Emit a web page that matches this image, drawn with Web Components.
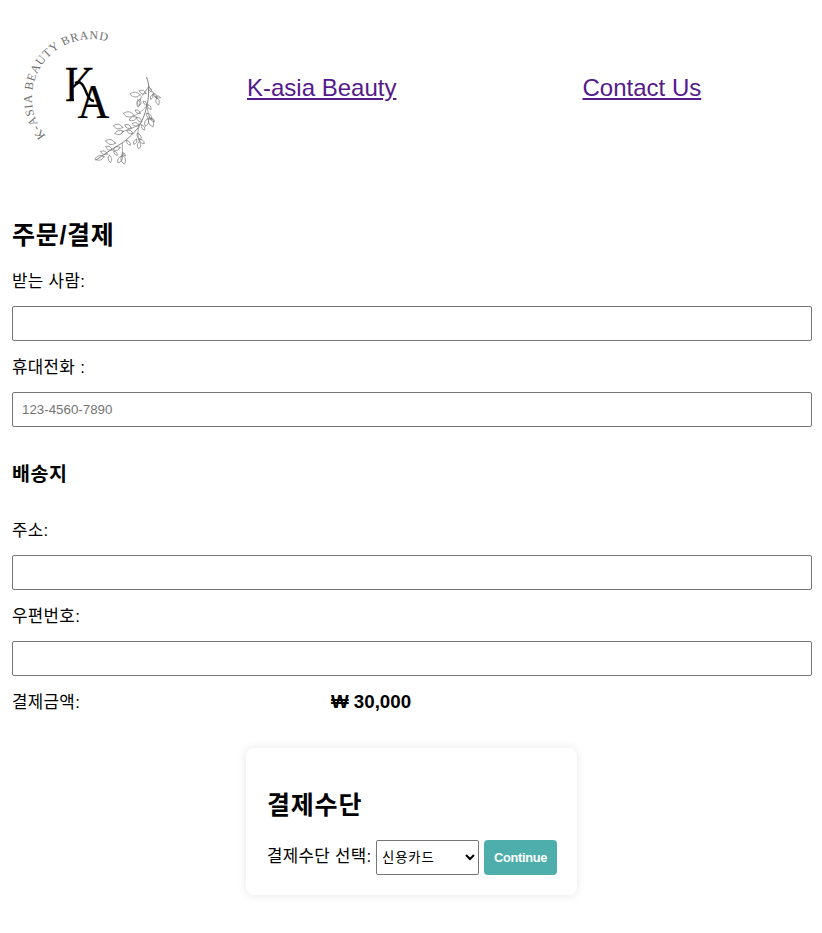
<!DOCTYPE html>
<html lang="ko">
<head>
<meta charset="utf-8">
<title>K-asia Beauty</title>
<style>
html{background:#fff}
body{margin:0;min-height:933px;color:#000;font:16px/22px "Liberation Sans","Noto Sans CJK KR",sans-serif}
</style>
</head>
<body>
<order-page></order-page>
<script>
const define = (name, html, setup) => customElements.define(name, class extends HTMLElement {
  constructor(){
    super();
    const t = document.createElement('template');
    t.innerHTML = html;
    this.attachShadow({mode:'open'}).append(t.content.cloneNode(true));
    if (setup) setup(this, this.shadowRoot);
  }
});

// Leaves of the sprig: base x, base y, direction in degrees, length
const leaves = [
 [176,52,60,14],[168,70,200,20],[150,75,185,28],[150,88,105,22],[144,90,80,16],[190,70,50,16],[197,80,10,14],[200,84,75,20],[188,74,110,14],
 [173,104,55,16],[170,105,230,14],[150,130,215,16],[132,136,190,30],[140,142,160,22],[170,130,50,22],[178,142,70,28],[182,145,40,14],[174,146,110,22],
 [155,155,220,18],[148,165,190,20],[155,165,60,16],[124,174,205,20],[98,172,190,26],[100,184,165,24],[128,190,205,18],
 [142,190,60,20],[148,208,40,18],[148,215,95,20],[140,208,120,16],[110,212,50,16],[76,220,195,28],[90,232,160,20],
 [96,255,75,26],[96,258,120,22],[98,248,50,12],[66,240,210,20],[52,252,200,20],[58,256,80,20],[42,260,165,26],[72,244,50,14]
];
const leafPaths = leaves.map(([x,y,a,l]) =>
  `<path transform="translate(${x} ${y}) rotate(${a})" d="M0 0Q${l*.5} ${-l*.55} ${l*1.1} 0Q${l*.5} ${l*.55} 0 0Z"/>`).join('');

define('brand-logo', `<style>:host{display:block;width:150px;height:150px}svg{display:block;overflow:visible}text{font-family:"Liberation Serif",serif}</style>
<svg width="150" height="150" viewBox="18 22 150 150" role="img" aria-label="K-asia Beauty Brand">
 <defs><path id="ring" d="M45.5 135.8A59 59 0 0 1 111.2 42.7"/>
 <clipPath id="stem"><path d="M60 60H100V70H91L74 89V104H60Z"/></clipPath></defs>
 <text font-size="12" fill="#707070"><textPath href="#ring" textLength="150" lengthAdjust="spacing">K-ASIA BEAUTY BRAND</textPath></text>
 <g clip-path="url(#stem)"><text transform="translate(65 101) scale(.83 1)" font-size="50" stroke="#000" stroke-width=".3">K</text></g>
 <path d="M75 83C82 80 84 87 87 94C89 99 91 101 94 101" fill="none" stroke="#000" stroke-width="2.4"/>
 <text transform="translate(77.5 118) scale(.92 1)" font-size="48" stroke="#000" stroke-width=".2">A</text>
 <g transform="translate(90 70) scale(.33333)" fill="none" stroke="#808080" stroke-width="2.1" stroke-linecap="round">
  <path stroke="#606060" stroke-width="2.4" d="M170 22C174 35 177 42 176 55C176 75 175 90 170 110C165 135 155 155 145 172C130 192 105 215 85 226C60 240 40 256 18 270"/>
  <path d="M176 50C165 68 155 74 150 90M177 50L200 84M170 108C155 125 145 132 132 138M170 108L180 148M150 162C130 175 115 178 95 186M150 160C145 175 140 190 148 215M97 220L97 260"/>
  ${leafPaths}
 </g>
</svg>`);

define('site-header', `<style>
:host{display:grid;grid-template-columns:150px 1fr 1fr;align-items:center;height:176px;padding:0 0 0 18px;box-sizing:border-box}
brand-logo{align-self:start;margin-top:22px}
nav{display:contents}
a{color:#551a8b;text-decoration:underline;font-size:24px;line-height:28px;justify-self:start}
a:first-child{margin-left:79px}a:last-child{margin-left:87.5px}
</style><brand-logo></brand-logo><nav><a href="#">K-asia Beauty</a><a href="#">Contact Us</a></nav>`);

define('form-field', `<style>
:host{display:block;margin-bottom:15px}
label{display:block;height:22px;font-size:16.8px;letter-spacing:.35px;margin-bottom:13px;padding-top:1px}
input{display:block;box-sizing:border-box;width:100%;height:35px;border:1px solid #767676;border-radius:2px;padding:8px 9px;font:13.333px "Liberation Sans",sans-serif;background:#fff}
input::placeholder{color:#757575}
</style><label><slot></slot></label><input>`, (el, root) => {
  root.querySelector('input').placeholder = el.getAttribute('placeholder') || '';
});

define('pay-card', `<style>
:host{display:block;box-sizing:border-box;width:331px;height:147px;padding:40px 20px 20px 21px;border-radius:8px;background:#fff;box-shadow:0 0 10px rgba(0,0,0,.1)}
h2{margin:0 0 18px;font-size:25px;line-height:34px;letter-spacing:.8px}
.row{display:flex;height:35px;gap:5px}
label{width:104px;line-height:33px;font-size:16.8px;letter-spacing:.3px;white-space:nowrap}
select{box-sizing:border-box;width:103px;height:35px;border:1px solid #767676;border-radius:2px;background:#fff;color:#000;padding:0 1px;font:13.333px "Liberation Sans","Noto Sans CJK KR",sans-serif;letter-spacing:.9px}
button{width:73px;height:35px;border:0;border-radius:4px;background:#4daeab;color:#fff;padding:0;font:bold 12.8px "Liberation Sans",sans-serif;letter-spacing:-.3px}
</style><h2>결제수단</h2><div class="row"><label>결제수단 선택:</label><select><option>신용카드</option></select><button>Continue</button></div>`);

define('order-page', `<style>
:host{display:block}
main{padding:42px 10px 0 12px}
h2{margin:0 0 18px;font-size:25px;line-height:34px;letter-spacing:.7px}
h3{margin:34px 0 32px;font-size:19.5px;line-height:26px;letter-spacing:.6px}
.total{display:grid;grid-template-columns:319px 1fr;height:22px}
.total span{padding-top:1px;font-size:16.8px;letter-spacing:.35px}
b{font-size:18.72px;line-height:21px}
pay-card{margin:35px 0 0 234px}
</style>
<site-header></site-header>
<main>
<h2>주문/결제</h2>
<form-field>받는 사람:</form-field>
<form-field placeholder="123-4560-7890">휴대전화 :</form-field>
<h3>배송지</h3>
<form-field>주소:</form-field>
<form-field>우편번호:</form-field>
<div class="total"><span>결제금액:</span><b>₩ 30,000</b></div>
<pay-card></pay-card>
</main>`);
</script>
</body>
</html>
